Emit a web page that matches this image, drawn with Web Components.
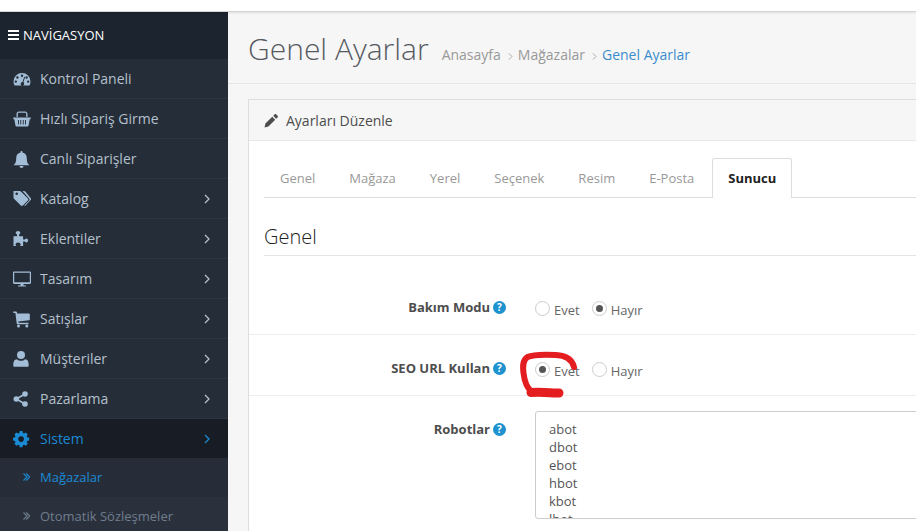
<!DOCTYPE html>
<html lang="tr"><head><meta charset="utf-8"><title>Genel Ayarlar</title>
<style>
html,body{margin:0;padding:0;height:100%;overflow:hidden;background:#f6f6f6}
body{font-family:"Open Sans",sans-serif;font-size:12px;color:#666}
</style></head><body>
<admin-app></admin-app>
<script>
const ICONS={
dashboard:'<path fill-rule="evenodd" d="M9 3A8.500 8.500 0 0 0 .5 11.500c0 1.500.4 2.900 1.100 4h14.800c.7-1.100 1.100-2.500 1.100-4A8.500 8.500 0 0 0 9 3zM9 4.500a1.200 1.200 0 1 1 0 2.400 1.200 1.200 0 0 1 0-2.400zM4.400 6.300a1.200 1.200 0 1 1 0 2.400 1.200 1.200 0 0 1 0-2.400zM13.600 6.300a1.200 1.200 0 1 1 0 2.400 1.200 1.200 0 0 1 0-2.400zM2.800 10.400a1.200 1.200 0 1 1 0 2.400 1.200 1.200 0 0 1 0-2.400zM15.200 10.400a1.200 1.200 0 1 1 0 2.400 1.200 1.200 0 0 1 0-2.400zM11.200 6.800l.9.300-1.700 5.200a1.800 1.800 0 1 1-.9-.3z"/>',
basket:'<path fill-rule="evenodd" d="M6 1.500h6c1.500 0 2.500 1 2.500 2.500v3h-1.300V4c0-.8-.5-1.200-1.200-1.200H6c-.7 0-1.200.4-1.200 1.200v3H3.500V4c0-1.500 1-2.500 2.500-2.500zM.3 7.500h17.400v1.700h-1l-1.200 6.600c-.1.500-.5.700-1 .7H3.500c-.5 0-.9-.2-1-.7L1.300 9.200h-1zM5 10v4.500h.9V10zm2.300 0v4.500h.9V10zm2.500 0v4.500h.9V10zm2.300 0v4.500h.9V10z"/>',
bell:'<path d="M8.500 1c.6 0 1 .4 1 1v.6c2.600.5 4.300 2.600 4.300 5.400 0 4.300 1 5.700 2.700 7.200H.5c1.700-1.500 2.700-2.900 2.700-7.200C3.200 5.200 4.900 3.100 7.500 2.600V2c0-.6.400-1 1-1zM6.500 16h4a2 2 0 0 1-4 0z"/>',
tags:'<path fill-rule="evenodd" d="M.5 1h6.200c.5 0 .9.200 1.200.5l7 7c.6.600.6 1.500 0 2.100l-5 5c-.6.600-1.500.6-2.100 0l-7-7C.500 8.300.5 8 .5 7.500zM3.700 2.500a1.300 1.300 0 1 0 0 2.600 1.300 1.300 0 0 0 0-2.600z"/><path d="M9.500 1h1.600c.5 0 .9.200 1.200.5l5.300 6.500c.6.600.6 1.500 0 2.100l-5 5.300c-.5.400-1 .5-1.500.4l5-5.200c.6-.7.600-1.600 0-2.200z"/>',
puzzle:'<path d="M4 6.300V4.500C3.200 4.100 2.700 3.500 2.700 2.800 2.700 1.700 3.800 1 5 1s2.300.7 2.300 1.800c0 .7-.5 1.300-1.200 1.700v1.800h4v3.200h1.900c.4-.6.900-.9 1.500-.9 1 0 1.500.9 1.500 1.900s-.5 1.900-1.500 1.900c-.6 0-1.100-.3-1.500-.9h-1.900v4.400H6.900c.5-.4.800-1 .8-1.600 0-1.100-1.200-1.900-2.600-1.900s-2.600.8-2.600 1.900c0 .6.300 1.200.8 1.600H.5V6.300z"/>',
desktop:'<path fill-rule="evenodd" d="M1.200 1.500h15.600c.7 0 1.200.5 1.200 1.200v10.100c0 .7-.5 1.200-1.200 1.200h-6.300v1.500h2.500v1H5v-1h2.500V14H1.200C.5 14 0 13.500 0 12.800V2.700c0-.7.500-1.200 1.200-1.200zM1.200 2.700v9.600h15.600V2.700z"/>',
cart:'<path d="M.3 1.500H3c.5 0 .8.200.9.700l.3 1.300h11.900c.4 0 .700.300.7.700v5.300c0 .4-.3.700-.6.700L5.300 11.500l.3 1.300h9.900v1.400H4.500c-.4 0-.7-.3-.8-.7L2.400 3H.3z"/><circle cx="5.500" cy="16" r="1.500"/><circle cx="13.800" cy="16" r="1.500"/>',
user:'<circle cx="8" cy="5" r="4"/><path d="M1.500 16.800c-.7 0-1.200-.6-1.200-1.300 0-3.500.8-6.300 3.700-6.300 1 1 2.500 1.600 4 1.600s3-.6 4-1.600c2.900 0 3.700 2.800 3.700 6.300 0 .7-.5 1.300-1.200 1.300z"/>',
share:'<circle cx="12" cy="4" r="2.800"/><circle cx="12" cy="14" r="2.800"/><circle cx="3.300" cy="9" r="2.800"/><path d="M3.300 9L12 4M3.300 9L12 14" stroke="currentColor" stroke-width="1.600" fill="none"/>',
cog:'<path fill-rule="evenodd" d="M5.900 1h2.800l.4 2 1.200.5 1.700-1.100 2 2-1.100 1.700.5 1.200 2 .4v2.800l-2 .4-.5 1.200 1.100 1.700-2 2-1.700-1.100-1.200.5-.4 2H5.900l-.4-2-1.200-.5-1.700 1.100-2-2 1.100-1.700-.5-1.200-2-.4V7.700l2-.4.5-1.200-1.100-1.700 2-2 1.700 1.100 1.200-.5zM7.300 6.300a2.800 2.800 0 1 0 0 5.600 2.800 2.800 0 0 0 0-5.600z" transform="translate(.8 0)"/>',
pencil:'<path d="M11.300 1.500c.5-.5 1.300-.5 1.800 0l1.400 1.400c.5.5.5 1.300 0 1.800l-1.500 1.500-3.200-3.200zM8.800 4l3.200 3.200-7.300 7.300-4.100.9.900-4.100z"/>'
};
function icon(n,s,vw){return `<svg width="${s}" height="${s}" viewBox="0 0 ${vw||18} ${vw||18}" fill="currentColor" aria-hidden="true">${ICONS[n]}</svg>`}

class SideItem extends HTMLElement{
 constructor(){super();const a=this.attachShadow({mode:'open'});
 const arrow=this.hasAttribute('arrow');
 a.innerHTML=`<style>
 :host{display:flex;align-items:center;height:39px;border-bottom:1px solid #2d3743;background:#252d38;color:#b4c0cc;font-size:14px}
 :host([active]){background:#181c24;color:#1b8ad4;border-bottom:0}
 .i{width:18px;height:18px;margin-left:13px;margin-right:9px;display:flex;color:#a3bdd6}
 :host([active]) .i{color:#1b8ad4}
 .t{flex:1;white-space:nowrap}
 .a{width:6px;height:10px;margin-right:18px;display:flex}
 </style><span class="i">${icon(this.getAttribute('icon'),18)}</span><span class="t"><slot></slot></span>
 ${arrow?'<svg class="a" viewBox="0 0 6 10" fill="none" stroke="currentColor" stroke-width="1.300"><path d="M1 1l4 4-4 4"/></svg>':''}`;}
}
class SubItem extends HTMLElement{
 constructor(){super();const a=this.attachShadow({mode:'open'});
 a.innerHTML=`<style>
 :host{display:flex;align-items:center;height:38px;padding-bottom:1px;background:#2a303c;color:#6f7e8e;font-size:13px;white-space:nowrap}
 :host([active]){background:#272d38;color:#1b8ad4}
 svg{margin-left:23px;margin-right:10px;width:7px;height:8px}
 </style><svg viewBox="0 0 7 8" fill="none" stroke="currentColor" stroke-width="1.100"><path d="M.5.5L4 4 .5 7.500M3.200.5L6.700 4 3.200 7.500"/></svg><slot></slot>`;}
}
class SideBar extends HTMLElement{
 constructor(){super();const a=this.attachShadow({mode:'open'});
 a.innerHTML=`<style>
 :host{display:block;width:228px;flex:none;background:#252d38;overflow:hidden}
 header{height:46px;padding-bottom:1px;background:#1c2430;color:#fff;font-size:13px;display:flex;align-items:center;padding-left:8px;gap:4px}
 header svg{width:11px;height:10px}
 </style><header><svg viewBox="0 0 11 10" fill="#fff"><path d="M0 0h11v2H0zM0 4h11v2H0zM0 8h11v2H0z"/></svg>NAVİGASYON</header><slot></slot>`;}
}
class TabBar extends HTMLElement{
 constructor(){super();const a=this.attachShadow({mode:'open'});
 a.innerHTML=`<style>
 :host{display:flex;border-bottom:1px solid #ddd;height:39px;font-size:13px;color:#999}
 </style><slot></slot>`;}
}
class TabItem extends HTMLElement{
 constructor(){super();const a=this.attachShadow({mode:'open'});
 a.innerHTML=`<style>
 :host{display:block;padding:11px 16px 0 17px;height:39px;box-sizing:border-box;margin-right:1px;white-space:nowrap;line-height:18px}
 :host(:first-child){padding-left:16px;padding-right:16px}
 :host([active]){border:1px solid #ddd;border-bottom:0;background:#fff;color:#222;font-weight:700;border-radius:3px 3px 0 0;height:40px;padding:10px 15px 0;margin:0 0 0 1px}
 </style><slot></slot>`;}
}
class HelpDot extends HTMLElement{
 constructor(){super();const a=this.attachShadow({mode:'open'});
 a.innerHTML=`<style>
 :host{display:inline-flex;width:13px;height:13px;border-radius:50%;background:#1e91cf;color:#fff;font:700 10px/13px "Open Sans",sans-serif;justify-content:center;font-style:normal}
 </style>?`;}
}
class RadioOpt extends HTMLElement{
 constructor(){super();const a=this.attachShadow({mode:'open'});
 a.innerHTML=`<style>
 :host{display:inline-flex;align-items:flex-start;gap:4px;font-size:13px;color:#666;line-height:18px}
 .r{width:15px;height:15px;border:1px solid #ccc;border-radius:50%;box-sizing:border-box;background:#fff;display:flex;align-items:center;justify-content:center}
 :host([checked]) .r::after{content:"";width:7px;height:7px;border-radius:50%;background:#555}
 </style><span class="r"></span><span class="l"><slot></slot></span>`;}
}
class FormRow extends HTMLElement{
 constructor(){super();const a=this.attachShadow({mode:'open'});
 a.innerHTML=`<style>
 :host{display:flex;align-items:flex-start;border-bottom:1px solid #ededed;height:61px;box-sizing:border-box}
 :host([last]){border-bottom:0;height:150px}
 .lab{width:257px;flex:none;display:flex;justify-content:flex-end;align-items:center;gap:3px;height:24px;margin-top:21px;font-size:13px;font-weight:700;color:#4d4d4d;white-space:nowrap}
 .c{margin-left:29px;margin-top:27px;display:flex;gap:12px;flex:1}
 </style><div class="lab"><slot name="label"></slot><help-dot></help-dot></div><div class="c"><slot></slot></div>`;}
}
class BotArea extends HTMLElement{
 constructor(){super();const a=this.attachShadow({mode:'open'});
 a.innerHTML=`<style>
 :host{display:block;width:600px;height:108px;margin-top:-12px;border:1px solid #ccc;border-radius:3px;box-sizing:border-box;overflow:hidden;background:#fff;padding:8px 13px;font-size:13px;line-height:18px;color:#555;white-space:pre-line}
 </style><slot></slot>`;}
}
class PageHead extends HTMLElement{
 constructor(){super();const a=this.attachShadow({mode:'open'});
 a.innerHTML=`<style>
 :host{display:flex;align-items:baseline;height:72px;box-sizing:border-box;border-bottom:1px solid #e6e6e6;padding:18px 0 0 20px;white-space:nowrap}
 h1{font-size:30px;font-weight:300;color:#565a61;margin:0;line-height:38px}
 nav{margin-left:13px;font-size:14px;color:#999;display:flex;align-items:center}
 svg{width:17px;height:7px;margin-top:3px;color:#aaa}
 b{font-weight:400;color:#3a8dcc}
 </style><h1>Genel Ayarlar</h1><nav>Anasayfa<svg viewBox="0 0 17 7" fill="none" stroke="currentColor"><path d="M8 .5L11 3.500 8 6.500"/></svg>Mağazalar<svg viewBox="0 0 17 7" fill="none" stroke="currentColor"><path d="M8 .5L11 3.500 8 6.500"/></svg><b>Genel Ayarlar</b></nav>`;}
}
class AdminApp extends HTMLElement{
 constructor(){super();const a=this.attachShadow({mode:'open'});
 a.innerHTML=`<style>
 :host{display:block;height:531px;width:916px;overflow:hidden;position:relative;background:#f6f6f6}
 .top{height:11px;background:#fff;border-bottom:1px solid #d4d4d4;box-shadow:0 1px 2px rgba(0,0,0,.1);position:relative}
 .main{display:flex;height:519px}
 .content{flex:1;min-width:0;overflow:hidden}
 .panel{margin:15px 0 0 20px;width:800px;border:1px solid #ddd;border-right:0;box-sizing:border-box}
 .ph{height:40px;display:flex;align-items:center;padding-left:15px;gap:7px;font-size:14px;color:#4d4d4d;border-bottom:1px solid #e8e8e8;background:#f6f6f6}
 .pb{background:#fff;padding:17px 0 0 15px;height:400px}
 h2{font-size:20px;font-weight:300;color:#222;margin:0;padding:26px 0 5px;line-height:26px;border-bottom:1px solid #e4e4e4;height:26px;box-sizing:content-box}
 .rows{margin:18px 0 0 -15px}
 .scrib{position:absolute;left:515px;top:345px;width:70px;height:55px;pointer-events:none}
 </style>
 <div class="top"></div>
 <div class="main">
 <side-bar>
  <side-item icon="dashboard">Kontrol Paneli</side-item>
  <side-item icon="basket">Hızlı Sipariş Girme</side-item>
  <side-item icon="bell">Canlı Siparişler</side-item>
  <side-item icon="tags" arrow>Katalog</side-item>
  <side-item icon="puzzle" arrow>Eklentiler</side-item>
  <side-item icon="desktop" arrow>Tasarım</side-item>
  <side-item icon="cart" arrow>Satışlar</side-item>
  <side-item icon="user" arrow>Müşteriler</side-item>
  <side-item icon="share" arrow>Pazarlama</side-item>
  <side-item icon="cog" arrow active>Sistem</side-item>
  <sub-item active>Mağazalar</sub-item>
  <sub-item>Otomatik Sözleşmeler</sub-item>
 </side-bar>
 <div class="content">
  <page-head></page-head>
  <div class="panel">
   <div class="ph">${icon('pencil',15,16)}Ayarları Düzenle</div>
   <div class="pb">
    <tab-bar><tab-item>Genel</tab-item><tab-item>Mağaza</tab-item><tab-item>Yerel</tab-item><tab-item>Seçenek</tab-item><tab-item>Resim</tab-item><tab-item>E-Posta</tab-item><tab-item active>Sunucu</tab-item></tab-bar>
    <h2>Genel</h2>
    <div class="rows">
     <form-row><span slot="label">Bakım Modu</span><radio-opt>Evet</radio-opt><radio-opt checked>Hayır</radio-opt></form-row>
     <form-row><span slot="label">SEO URL Kullan</span><radio-opt checked>Evet</radio-opt><radio-opt>Hayır</radio-opt></form-row>
     <form-row last><span slot="label">Robotlar</span><bot-area>abot
dbot
ebot
hbot
kbot
lbot</bot-area></form-row>
    </div>
   </div>
  </div>
 </div>
 </div>
 <svg class="scrib" viewBox="515 345 70 55" fill="none" stroke="#e41e20" stroke-width="6" stroke-linecap="round" stroke-linejoin="round"><path d="M574 367C572 359 566 355.500 556 355 546 354.500 533 354.500 527.500 357 523 360 522.500 365 523.500 373 524.500 381 526 387 531 391"/><path d="M531 392.500C540 391.500 552 393 559 393" stroke-width="9"/></svg>`;}
}
[['side-item',SideItem],['sub-item',SubItem],['side-bar',SideBar],['tab-bar',TabBar],['tab-item',TabItem],['help-dot',HelpDot],['radio-opt',RadioOpt],['form-row',FormRow],['bot-area',BotArea],['page-head',PageHead],['admin-app',AdminApp]].forEach(([n,c])=>customElements.define(n,c));
</script>
</body></html>
